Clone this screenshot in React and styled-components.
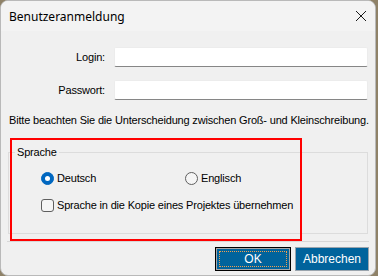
import React from 'react';
import styled, { createGlobalStyle } from 'styled-components';

const GlobalStyle = createGlobalStyle`
  html, body {
    margin: 0;
    padding: 0;
    background: #8f8268;
  }
  body {
    font-family: "Liberation Sans", Arial, sans-serif;
  }
`;

const Window = styled.div`
  position: relative;
  width: 376px;
  height: 276px;
  box-sizing: border-box;
  background: #f0f0f0;
  border: 1px solid #b9b9b9;
  border-radius: 8px;
  overflow: hidden;
  display: flex;
  flex-direction: column;
  color: #000;
`;

const TitleBar = styled.div`
  height: 30px;
  display: flex;
  align-items: center;
  justify-content: space-between;
  padding: 0 8px 0 8px;
  background: #f3f3f3;
`;

const Title = styled.span`
  font-family: "Noto Sans", "Liberation Sans", sans-serif;
  font-size: 12px;
  margin-top: 1px;
`;

const CloseIcon = () => (
  <svg width="12" height="12" viewBox="0 0 12 12">
    <path d="M1 1 L11 11 M11 1 L1 11" stroke="#1a1a1a" strokeWidth="1" fill="none" />
  </svg>
);

const Body = styled.div`
  padding: 16px 7px 0 7px;
  font-size: 11px;
  letter-spacing: -0.18px;
`;

const FormRow = styled.div`
  display: flex;
  align-items: center;
  gap: 9px;
  margin-bottom: ${p => p.$gap || 0}px;
`;

const Label = styled.label`
  width: 97px;
  text-align: right;
`;

const Input = styled.div`
  flex: 1;
  height: 20px;
  box-sizing: border-box;
  background: #fff;
  border: 1px solid #ececec;
  border-bottom: 1px solid #868686;
  border-radius: 2px;
`;

const Note = styled.div`
  margin: 13px 0 0 1px;
  line-height: 14px;
  white-space: nowrap;
`;

const GroupBox = styled.fieldset`
  margin: 18px 0 0 0;
  padding: 0 0 20px 6px;
  border: 1px solid #dcdcdc;
  min-width: 0;
`;

const Legend = styled.legend`
  padding: 0 2px;
  line-height: 14px;
`;

const GroupContent = styled.div`
  margin: 12px 0 0 26px;
  display: flex;
  flex-direction: column;
  gap: 12px;
`;

const RadioRow = styled.div`
  display: grid;
  grid-template-columns: 144px auto;
`;

const Option = styled.div`
  display: flex;
  align-items: center;
  gap: 3px;
  line-height: 15px;
`;

const RadioMark = styled.span`
  width: 13px;
  height: 13px;
  box-sizing: border-box;
  border-radius: 50%;
  display: inline-flex;
  align-items: center;
  justify-content: center;
  background: ${p => (p.$checked ? '#0067c0' : '#f5f5f5')};
  border: 1px solid ${p => (p.$checked ? '#0067c0' : '#5f5f5f')};
  &::after {
    content: '';
    display: ${p => (p.$checked ? 'block' : 'none')};
    width: 5px;
    height: 5px;
    border-radius: 50%;
    background: #fff;
  }
`;

const CheckMark = styled.span`
  width: 13px;
  height: 13px;
  box-sizing: border-box;
  border-radius: 3px;
  background: #f5f5f5;
  border: 1px solid #5f5f5f;
`;

const Separator = styled.div`
  margin: 7px 0 0 6px;
  width: 362px;
  border-top: 1px solid #d7d7d7;
`;

const ButtonBar = styled.div`
  display: flex;
  justify-content: flex-end;
  gap: 4px;
  padding: 5px 6px 0 0;
`;

const Button = styled.button`
  width: ${p => p.$width}px;
  height: 24px;
  box-sizing: border-box;
  position: relative;
  background: #00639c;
  color: #fff;
  font-family: "Liberation Sans", Arial, sans-serif;
  font-size: 12px;
  border: 1px solid ${p => (p.$default ? '#000' : '#9aa4ad')};
  box-shadow: ${p => (p.$default ? 'inset 0 0 0 1px #a8a8a8' : 'none')};
  padding: 0;
  &::after {
    content: '';
    display: ${p => (p.$default ? 'block' : 'none')};
    position: absolute;
    inset: 3px;
    border: 1px dotted #f0a050;
  }
`;

const Highlight = styled.div`
  position: absolute;
  left: 9px;
  top: 137px;
  width: 292px;
  height: 103px;
  box-sizing: border-box;
  border: 2px solid #ff0000;
  pointer-events: none;
`;

export default function App() {
  return (
    <>
      <GlobalStyle />
      <Window>
        <TitleBar>
          <Title>Benutzeranmeldung</Title>
          <CloseIcon />
        </TitleBar>
        <Body>
          <FormRow $gap={13}>
            <Label>Login:</Label>
            <Input />
          </FormRow>
          <FormRow>
            <Label>Passwort:</Label>
            <Input />
          </FormRow>
          <Note>Bitte beachten Sie die Unterscheidung zwischen Groß- und Kleinschreibung.</Note>
          <GroupBox>
            <Legend>Sprache</Legend>
            <GroupContent>
              <RadioRow>
                <Option>
                  <RadioMark $checked />
                  Deutsch
                </Option>
                <Option>
                  <RadioMark />
                  Englisch
                </Option>
              </RadioRow>
              <Option>
                <CheckMark />
                Sprache in die Kopie eines Projektes übernehmen
              </Option>
            </GroupContent>
          </GroupBox>
        </Body>
        <Separator />
        <ButtonBar>
          <Button $width={76} $default>OK</Button>
          <Button $width={74}>Abbrechen</Button>
        </ButtonBar>
        <Highlight />
      </Window>
    </>
  );
}
